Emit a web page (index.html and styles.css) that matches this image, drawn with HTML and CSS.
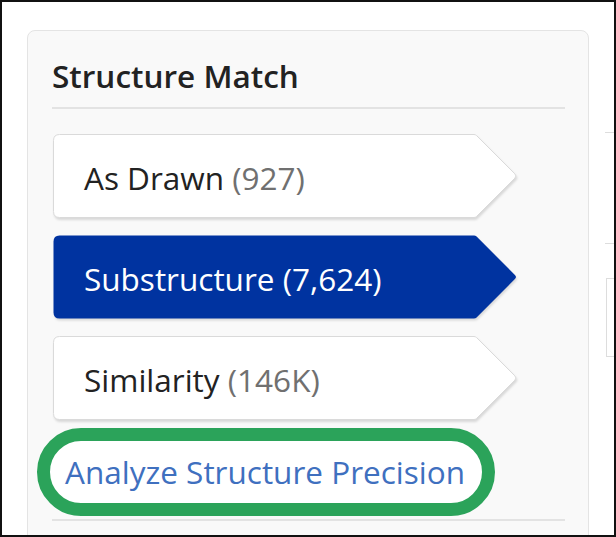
FILE: index.html
```html
<!DOCTYPE html>
<html lang="en">
<head>
<meta charset="utf-8">
<title>Structure Match</title>
<link rel="stylesheet" href="styles.css">
</head>
<body>
<div class="frame">
  <section class="panel">
    <h2 class="panel-title">Structure Match</h2>
    <div class="options">
      <a class="opt" href="#">
        <svg class="opt-shape" viewBox="0 0 466 84" width="466" height="84" aria-hidden="true"><path class="shape-plain" d="M6.5,0.5 H421 Q422.5,0.5 423.6,1.6 L461.9,39.9 Q464,42 461.9,44.1 L423.6,82.4 Q422.5,83.5 421,83.5 H6.5 Q0.5,83.5 0.5,77.5 V6.5 Q0.5,0.5 6.5,0.5 Z"/></svg>
        <span class="opt-label">As Drawn <span class="count">(927)</span></span>
      </a>
      <a class="opt opt-active" href="#">
        <svg class="opt-shape" viewBox="0 0 466 84" width="466" height="84" aria-hidden="true"><path class="shape-active" d="M6.5,0.5 H421 Q422.5,0.5 423.6,1.6 L461.9,39.9 Q464,42 461.9,44.1 L423.6,82.4 Q422.5,83.5 421,83.5 H6.5 Q0.5,83.5 0.5,77.5 V6.5 Q0.5,0.5 6.5,0.5 Z"/></svg>
        <span class="opt-label">Substructure <span class="count">(7,624)</span></span>
      </a>
      <a class="opt" href="#">
        <svg class="opt-shape" viewBox="0 0 466 84" width="466" height="84" aria-hidden="true"><path class="shape-plain" d="M6.5,0.5 H421 Q422.5,0.5 423.6,1.6 L461.9,39.9 Q464,42 461.9,44.1 L423.6,82.4 Q422.5,83.5 421,83.5 H6.5 Q0.5,83.5 0.5,77.5 V6.5 Q0.5,0.5 6.5,0.5 Z"/></svg>
        <span class="opt-label">Similarity <span class="count">(146K)</span></span>
      </a>
    </div>
    <div class="highlight">
      <a class="analyze-link" href="#">Analyze Structure Precision</a>
    </div>
    <div class="panel-rule"></div>
  </section>
  <aside class="side">
    <div class="side-row first"></div>
    <div class="side-row second"></div>
    <div class="side-box"></div>
  </aside>
</div>
</body>
</html>
```

FILE: styles.css
```css
* { box-sizing: border-box; }

html, body {
  margin: 0;
  padding: 0;
  background: #ffffff;
}

body {
  font-family: "Open Sans", "Noto Sans", "Liberation Sans", sans-serif;
  color: #222222;
}

.frame {
  width: 616px;
  height: 537px;
  border: 2px solid #111111;
  display: flex;
  align-items: flex-start;
  overflow: hidden;
  background: #ffffff;
}

.panel {
  flex: 0 0 562px;
  margin: 28px 0 0 25px;
  min-height: 560px;
  background: #f9f9f9;
  border: 1px solid #e4e4e4;
  border-radius: 8px;
  padding: 25px 23px 20px 24px;
}

.panel-title {
  margin: 0;
  font-size: 31.5px;
  font-weight: 600;
  line-height: 40px;
  color: #222222;
  padding-bottom: 11px;
  border-bottom: 2px solid #e3e3e3;
}

.options {
  margin-top: 25px;
  margin-left: 1px;
  display: flex;
  flex-direction: column;
  gap: 17px;
}

.opt {
  position: relative;
  width: 466px;
  height: 84px;
  display: flex;
  align-items: center;
  padding: 3px 0 0 31px;
  text-decoration: none;
  color: #222222;
}

.opt-shape {
  position: absolute;
  left: 0;
  top: 0;
  overflow: visible;
  filter: drop-shadow(1px 2px 1px rgba(0, 0, 0, 0.13));
}

.shape-plain {
  fill: #ffffff;
  stroke: #dadada;
  stroke-width: 1;
}

.shape-active {
  fill: #0033a0;
}

.opt-label {
  position: relative;
  font-size: 31.5px;
  line-height: 40px;
  white-space: nowrap;
}

.count {
  color: #707070;
}

.opt-active .opt-label,
.opt-active .count {
  color: #ffffff;
}

.highlight {
  margin: 8px 0 0 -15px;
  width: 458px;
  height: 88px;
  border: 13px solid #2ba35a;
  border-radius: 44px;
  background: #ffffff;
  display: flex;
  align-items: center;
  padding-left: 15px;
}

.analyze-link {
  font-size: 31.5px;
  line-height: 40px;
  color: #3f70bf;
  text-decoration: none;
  white-space: nowrap;
}

.panel-rule {
  margin-top: 3px;
  border-top: 2px solid #e3e3e3;
}

.side {
  flex: 1;
  margin-left: 16px;
  display: flex;
  flex-direction: column;
}

.side-row {
  border-top: 1px solid #dddddd;
}

.side-row.first { margin-top: 130px; }
.side-row.second { margin-top: 110px; }

.side-box {
  margin-top: 34px;
  height: 79px;
  border: 1px solid #dddddd;
  border-right: none;
  margin-left: 1px;
}
```
